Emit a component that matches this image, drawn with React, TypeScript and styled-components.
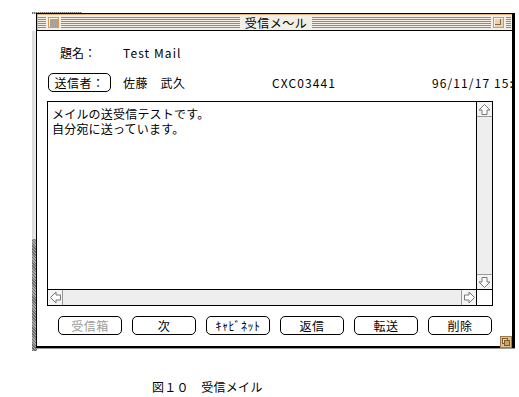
import React from 'react';
import styled, { createGlobalStyle } from 'styled-components';

const GlobalStyle = createGlobalStyle`
  html, body {
    margin: 0;
    padding: 0;
    background: #fff;
  }
  body {
    font-family: "Noto Sans CJK JP", "Noto Sans", sans-serif;
    font-size: 12px;
    color: #000;
  }
`;

const Desktop = styled.div`
  position: relative;
  width: 519px;
  height: 397px;
  overflow: hidden;
  box-sizing: border-box;
  padding: 13px 0 0 36px;
  background: #fff;
`;

// bits of the window lying behind ours
const BehindStrip = styled.div<{ $top: number; $height: number; $dark?: boolean }>`
  position: absolute;
  left: 32px;
  top: ${(p) => p.$top}px;
  width: 5px;
  height: ${(p) => p.$height}px;
  background: ${(p) =>
    p.$dark
      ? 'repeating-linear-gradient(45deg, #6e6e6e 0 1px, #a8a8a8 1px 2px)'
      : 'linear-gradient(to right, #d8d8d8, #f0f0f0)'};
`;

const BehindEdge = styled.div`
  position: absolute;
  left: 32px;
  top: 12px;
  width: 50px;
  height: 2px;
  background: repeating-linear-gradient(90deg, #777 0 1px, #bbb 1px 2px);
`;

const Window = styled.div`
  position: relative;
  width: 479px;
  height: 335px;
  box-sizing: border-box;
  border: 1px solid #000;
  border-right-width: 3px;
  border-bottom-width: 2px;
  background: #fff;
  display: flex;
  flex-direction: column;
  box-shadow: 0 1px 0 #999;
`;

const TitleBar = styled.div`
  height: 17px;
  box-sizing: border-box;
  border-bottom: 1px solid #000;
  background: #f3eee6;
  box-shadow: inset 1px 1px 0 #e3b27a;
  display: flex;
  align-items: center;
  padding: 0 1px;
`;

const Stripes = styled.div<{ $width?: number }>`
  height: 11px;
  flex: ${(p) => (p.$width ? `0 0 ${p.$width}px` : '1')};
  background: repeating-linear-gradient(to bottom, #8c8c8c 0 1px, transparent 1px 2px);
`;

const TitleBox = styled.div<{ $zoom?: boolean }>`
  position: relative;
  width: 11px;
  height: 11px;
  box-sizing: border-box;
  margin: 0 2px;
  border: 1px solid #d49a55;
  background: ${(p) => (p.$zoom ? '#e6d3b5' : '#a9a29a')};
  box-shadow: inset 1px 1px 0 #fff3e0;

  &::after {
    content: '';
    display: ${(p) => (p.$zoom ? 'block' : 'none')};
    position: absolute;
    left: 1px;
    top: 1px;
    width: 5px;
    height: 5px;
    border-right: 1px solid #8a6a3a;
    border-bottom: 1px solid #8a6a3a;
  }
`;

const TitleText = styled.div`
  padding: 0 5px;
  font-size: 12px;
  line-height: 15px;
  white-space: nowrap;
  letter-spacing: 0.5px;
`;

const Body = styled.div`
  flex: 1;
  display: flex;
  flex-direction: column;
  padding: 0 19px 0 10px;
  overflow: hidden;
`;

const HeaderRow = styled.div<{ $top: number; $height: number }>`
  display: grid;
  grid-template-columns: 76px 149px 160px 1fr;
  align-items: center;
  margin-top: ${(p) => p.$top}px;
  height: ${(p) => p.$height}px;
  white-space: nowrap;
`;

const FieldLabel = styled.div`
  padding-left: 13px;
`;

const Value = styled.div<{ $latin?: boolean }>`
  letter-spacing: ${(p) => (p.$latin ? '1.1px' : '0.5px')};
`;

const SenderButton = styled.div`
  width: 63px;
  height: 19px;
  box-sizing: border-box;
  margin-left: 1px;
  border: 1px solid #000;
  border-radius: 5px;
  display: flex;
  align-items: center;
  justify-content: center;
  letter-spacing: 0.5px;
`;

const TextArea = styled.div`
  margin-top: 9px;
  height: 205px;
  box-sizing: border-box;
  border: 1px solid #000;
  display: grid;
  grid-template-columns: 1fr 16px;
  grid-template-rows: 1fr 16px;
`;

const Message = styled.div`
  padding: 4px 4px;
  line-height: 15px;
  letter-spacing: 0.2px;
`;

const VScroll = styled.div`
  border-left: 1px solid #000;
  background: #eeeeee;
  display: flex;
  flex-direction: column;
  justify-content: space-between;
`;

const HScroll = styled.div`
  border-top: 1px solid #000;
  background: #eeeeee;
  display: flex;
  justify-content: space-between;
`;

const Corner = styled.div`
  border-left: 1px solid #000;
  border-top: 1px solid #000;
  background: #fff;
`;

const ArrowBox = styled.div<{ $side: 'top' | 'bottom' | 'left' | 'right' }>`
  width: 15px;
  height: 15px;
  box-sizing: border-box;
  background: #f4f4f4;
  display: flex;
  align-items: center;
  justify-content: center;
  ${(p) => `border-${p.$side === 'top' ? 'bottom' : p.$side === 'bottom' ? 'top' : p.$side === 'left' ? 'right' : 'left'}: 1px solid #999;`}
`;

const ButtonRow = styled.div`
  margin-top: 10px;
  padding-left: 11px;
  display: flex;
  gap: 10px;
`;

const ActionButton = styled.div<{ $disabled?: boolean }>`
  width: 64px;
  height: 19px;
  box-sizing: border-box;
  border: 1px solid #000;
  border-radius: 5px;
  display: flex;
  align-items: center;
  justify-content: center;
  color: ${(p) => (p.$disabled ? '#9a9a9a' : '#000')};
  letter-spacing: 0.5px;
  white-space: nowrap;
`;

const GrowBox = styled.div`
  position: absolute;
  right: 0;
  bottom: 0;
  width: 12px;
  height: 12px;
`;

const Caption = styled.div`
  margin: 32px 0 0 116px;
  line-height: 14px;
  letter-spacing: 0.3px;
`;

const rotations = { top: 0, right: 90, bottom: 180, left: 270 };

function Arrow({ side }: { side: 'top' | 'bottom' | 'left' | 'right' }) {
  return (
    <ArrowBox $side={side}>
      <svg width="13" height="13" viewBox="0 0 13 13" style={{ transform: `rotate(${rotations[side]}deg)` }}>
        <polygon
          points="6.5,1.5 12,7 9,7 9,11.5 4,11.5 4,7 1,7"
          fill="#fff"
          stroke="#777"
          strokeWidth="1"
        />
      </svg>
    </ArrowBox>
  );
}

const buttons = [
  { label: '受信箱', disabled: true },
  { label: '次' },
  { label: 'ｷｬﾋﾞﾈｯﾄ' },
  { label: '返信' },
  { label: '転送' },
  { label: '削除' },
];

export default function App() {
  return (
    <>
      <GlobalStyle />
      <Desktop>
        <BehindEdge />
        <BehindStrip $top={31} $height={208} />
        <BehindStrip $top={239} $height={112} $dark />
        <Window>
          <TitleBar>
            <Stripes $width={8} />
            <TitleBox />
            <Stripes />
            <TitleText>受信メ〜ル</TitleText>
            <Stripes />
            <TitleBox $zoom />
            <Stripes $width={5} />
          </TitleBar>
          <Body>
            <HeaderRow $top={11} $height={20}>
              <FieldLabel>題名：</FieldLabel>
              <Value $latin>Test Mail</Value>
            </HeaderRow>
            <HeaderRow $top={11} $height={19}>
              <SenderButton>送信者：</SenderButton>
              <Value>佐藤　武久</Value>
              <Value $latin>CXC03441</Value>
              <Value $latin>96/11/17 15:32</Value>
            </HeaderRow>
            <TextArea>
              <Message>
                メイルの送受信テストです。
                <br />
                自分宛に送っています。
              </Message>
              <VScroll>
                <Arrow side="top" />
                <Arrow side="bottom" />
              </VScroll>
              <HScroll>
                <Arrow side="left" />
                <Arrow side="right" />
              </HScroll>
              <Corner />
            </TextArea>
            <ButtonRow>
              {buttons.map((b) => (
                <ActionButton key={b.label} $disabled={b.disabled}>
                  {b.label}
                </ActionButton>
              ))}
            </ButtonRow>
          </Body>
          <GrowBox>
            <svg width="12" height="12" viewBox="0 0 12 12">
              <rect x="0.5" y="0.5" width="11" height="11" fill="#e2c08c" stroke="#a07a44" />
              <rect x="2.5" y="2.5" width="5" height="5" fill="#f1dcb6" stroke="#7a5a2e" />
              <rect x="4.5" y="4.5" width="5" height="5" fill="#c9a46a" stroke="#7a5a2e" />
            </svg>
          </GrowBox>
        </Window>
        <Caption>図１０　受信メイル</Caption>
      </Desktop>
    </>
  );
}
